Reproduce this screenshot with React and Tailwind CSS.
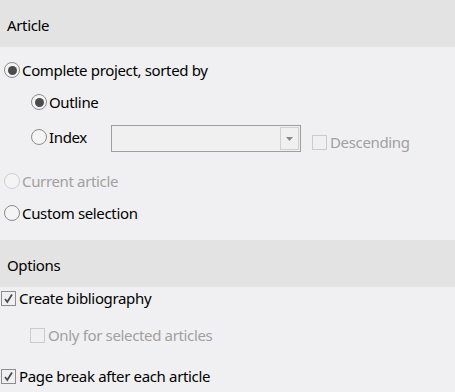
import React from 'react';

const font = { fontFamily: '"Noto Sans", "Open Sans", sans-serif' };

function Radio({ checked, disabled }) {
  return (
    <span
      className={`flex h-4 w-4 shrink-0 items-center justify-center rounded-full border bg-[#f4f4f4] ${
        disabled ? 'border-[#cfcfcf]' : 'border-[#8c8c8c]'
      }`}
    >
      {checked && <span className="h-[9px] w-[9px] rounded-full bg-[#4b4b4b]" />}
    </span>
  );
}

function Check({ checked, disabled }) {
  return (
    <span
      className={`flex h-[15px] w-[15px] shrink-0 items-center justify-center border ${
        disabled ? 'border-[#cbcbcb]' : 'border-[#8c8c8c]'
      }`}
    >
      {checked && (
        <svg width="11" height="11" viewBox="0 0 11 11">
          <path d="M2 6 L4.3 9 L9 1.5" fill="none" stroke="#4b4b4b" strokeWidth="1.8" />
        </svg>
      )}
    </span>
  );
}

function Header({ children }) {
  return (
    <div className="flex h-[47px] items-center bg-[#e3e3e3] pl-[7px] pt-[3px] text-[15px] text-black">
      {children}
    </div>
  );
}

export default function App() {
  return (
    <div className="h-[392px] w-[455px] overflow-hidden bg-[#f0f0f2] tracking-[-0.35px]" style={font}>
      <Header>Article</Header>

      <div className="flex flex-col pt-[7px] pb-[11px] text-[15px]">
        <div className="flex h-8 items-center gap-[2px] pl-1">
          <Radio checked />
          <span className="text-black">Complete project, sorted by</span>
        </div>
        <div className="flex h-8 items-center gap-[2px] pl-[31px]">
          <Radio checked />
          <span className="text-black">Outline</span>
        </div>
        <div className="flex h-[38px] items-center pl-[31px]">
          <Radio />
          <span className="ml-[2px] w-[62px] text-black">Index</span>
          <div className="mt-[3px] flex h-[27px] w-[190px] items-center justify-end border border-[#9e9e9e] bg-[#f0f0f0] pr-[1px]">
            <div className="flex h-[23px] w-[19px] items-center justify-center border border-[#d0d0d0]">
              <svg width="7" height="4" viewBox="0 0 7 4">
                <path d="M0 0 H7 L3.5 4 Z" fill="#8a8a8a" />
              </svg>
            </div>
          </div>
          <div className="ml-[11px] mt-[10px] flex items-center gap-[3px]">
            <Check disabled />
            <span className="text-[#a0a0a0]">Descending</span>
          </div>
        </div>
        <div className="mt-[9px] flex h-8 items-center gap-[2px] pl-1">
          <Radio disabled />
          <span className="text-[#a0a0a0]">Current article</span>
        </div>
        <div className="flex h-8 items-center gap-[2px] pl-1">
          <Radio />
          <span className="text-black">Custom selection</span>
        </div>
      </div>

      <Header>Options</Header>

      <div className="flex flex-col text-[15px]">
        <div className="flex h-[22px] items-center gap-[3px] pl-[1px]">
          <Check checked />
          <span className="text-black">Create bibliography</span>
        </div>
        <div className="mt-[11px] flex h-[30px] items-center gap-[3px] pl-[30px]">
          <Check disabled />
          <span className="text-[#a0a0a0]">Only for selected articles</span>
        </div>
        <div className="mt-[11px] flex h-[30px] items-center gap-[3px] pl-[1px]">
          <Check checked />
          <span className="text-black">Page break after each article</span>
        </div>
      </div>
    </div>
  );
}
